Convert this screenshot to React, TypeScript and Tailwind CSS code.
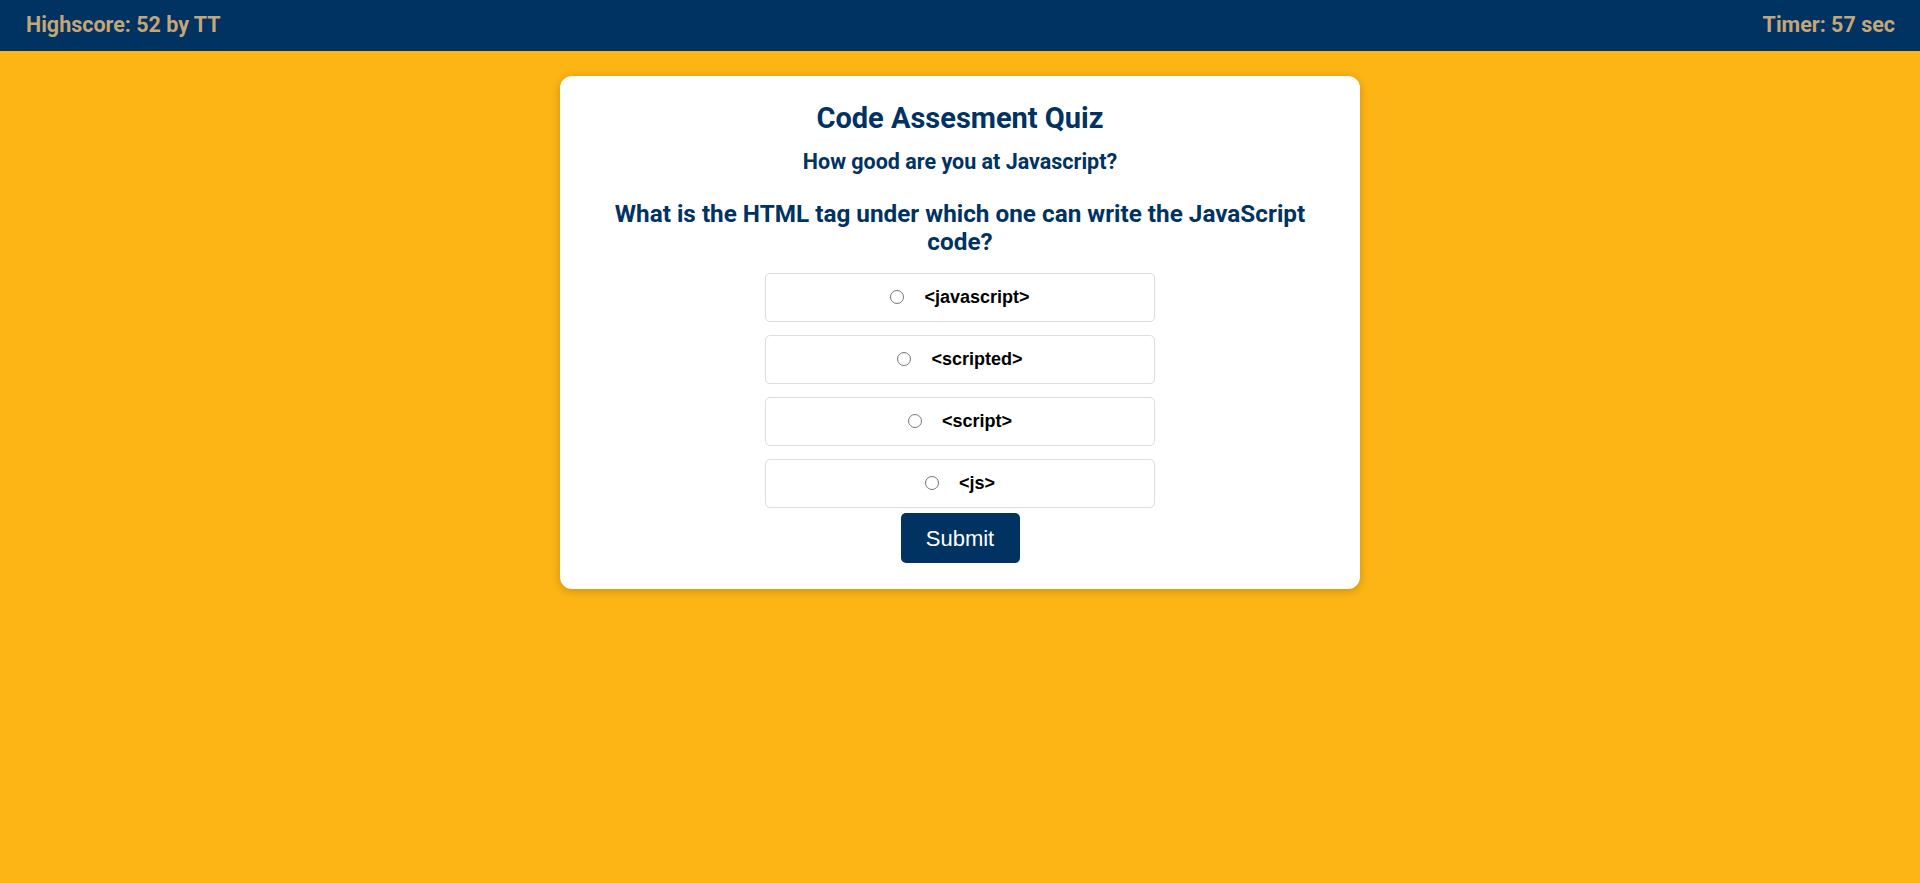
import { useState } from 'react';

const options = ['<javascript>', '<scripted>', '<script>', '<js>'];

const App = () => {
  const [picked, setPicked] = useState<number | null>(null);

  return (
    <div className="min-h-screen bg-[#fdb515] font-['Roboto',sans-serif]">
      {/* Top bar */}
      <header className="h-[51px] bg-[#003262] flex items-center justify-between pl-[26px] pr-[25px] text-[#c4a677] text-[21.5px] font-bold">
        <span>Highscore: 52 by TT</span>
        <span>Timer: 57 sec</span>
      </header>

      {/* Quiz card */}
      <main className="flex justify-center pt-[25px]">
        <div className="w-[800px] bg-white rounded-xl shadow-[0_2px_10px_rgba(0,0,0,0.2)] px-10 pt-[25px] pb-[26px] flex flex-col items-center text-center text-[#003262]">
          <h1 className="text-[29px] leading-[34px] font-bold">Code Assesment Quiz</h1>
          <h2 className="mt-[14px] text-[21.5px] leading-[25px] font-bold">How good are you at Javascript?</h2>
          <h3 className="mt-[26px] text-[24.3px] leading-[28px] font-bold">
            What is the HTML tag under which one can write the JavaScript code?
          </h3>

          <div className="mt-[17px] w-[390px] flex flex-col gap-[13px]">
            {options.map((opt, i) => (
              <label
                key={opt}
                className="h-[49px] border border-[#dddddd] rounded-[5px] flex items-center justify-center gap-5 font-['Liberation_Sans',Arial,sans-serif] text-[18px] font-bold text-black cursor-pointer"
              >
                <input
                  type="radio"
                  name="answer"
                  checked={picked === i}
                  onChange={() => setPicked(i)}
                  className="w-[14px] h-[14px] -mt-[2px]"
                />
                <span>{opt}</span>
              </label>
            ))}
          </div>

          <button className="mt-[5px] w-[119px] h-[50px] bg-[#003262] text-white rounded-[5px] font-['Liberation_Sans',Arial,sans-serif] text-[22px]">
            Submit
          </button>
        </div>
      </main>
    </div>
  );
};

export default App;
